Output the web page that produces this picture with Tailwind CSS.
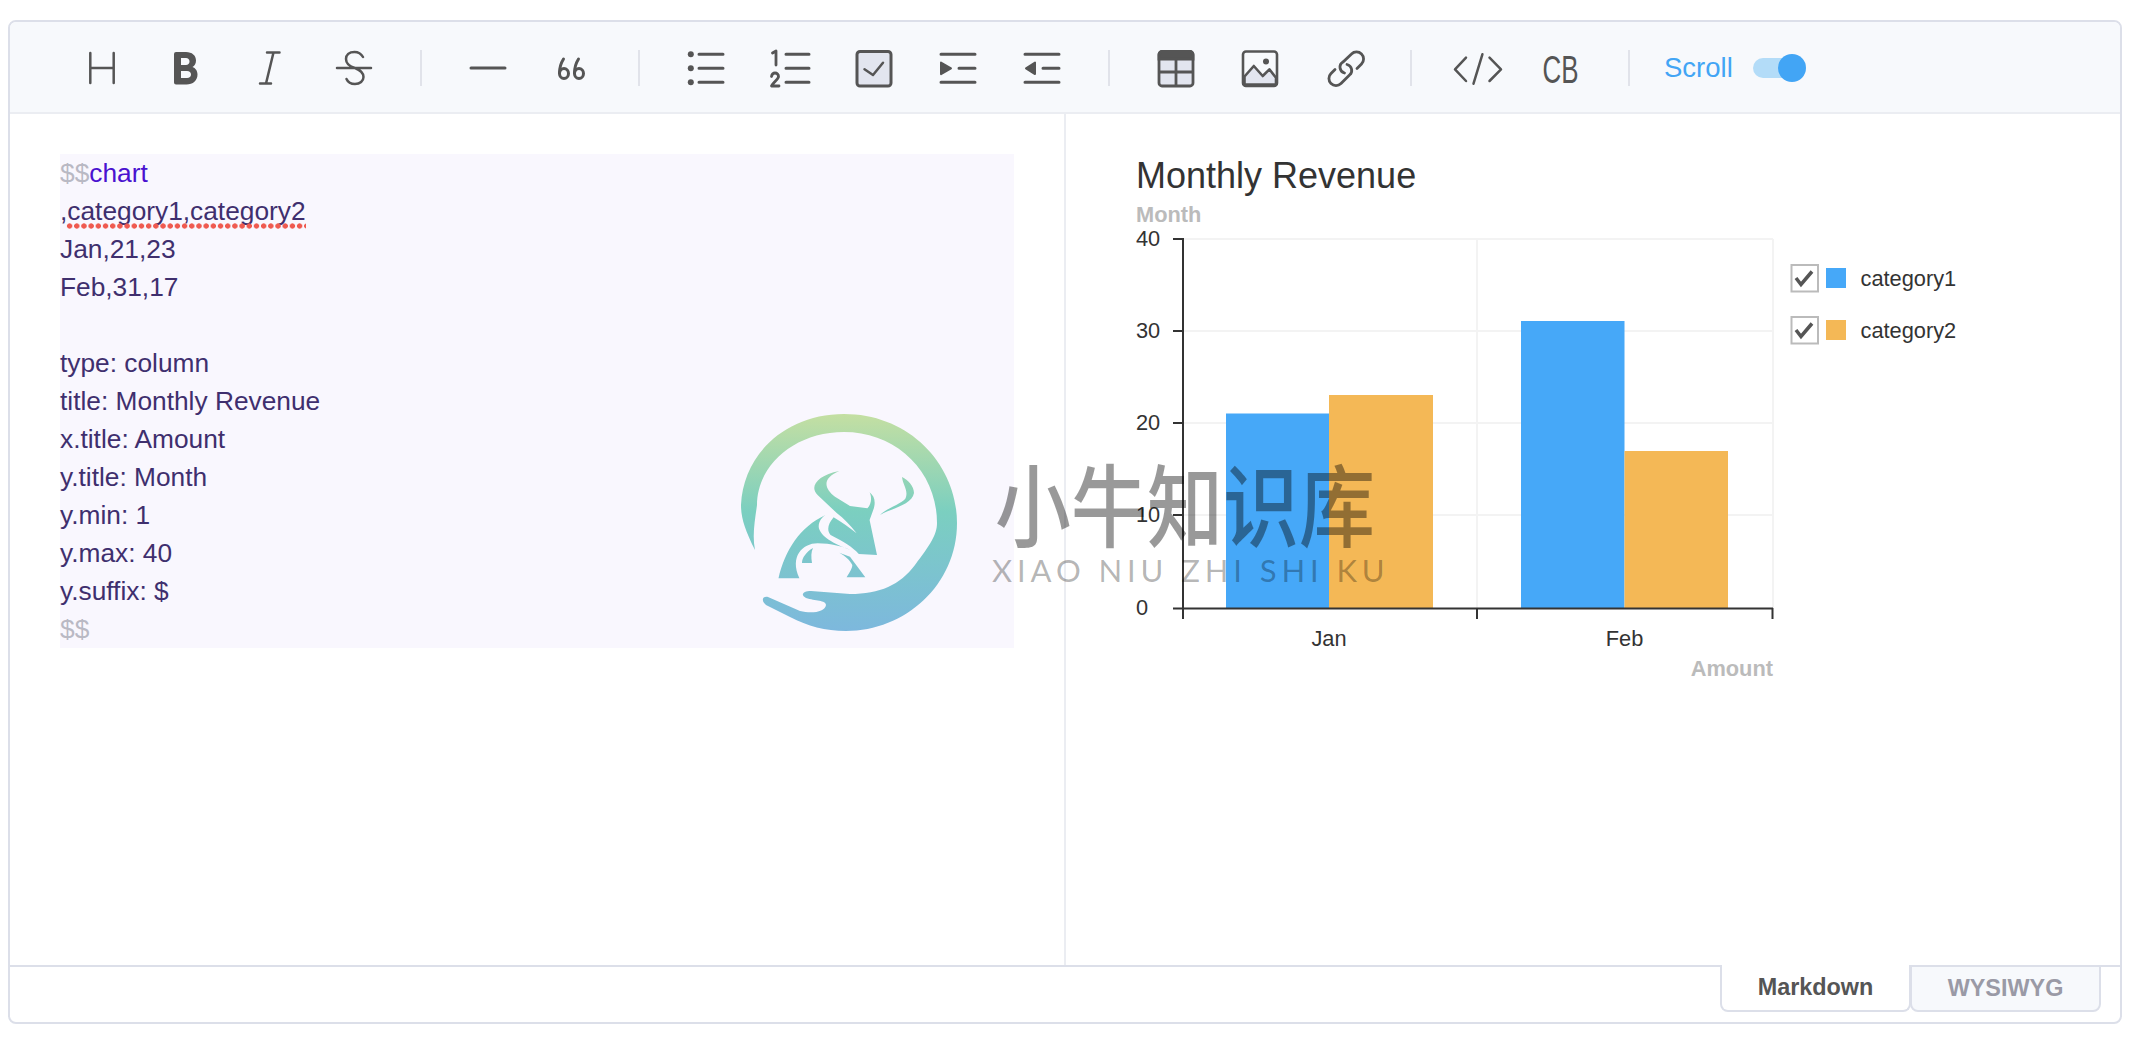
<!DOCTYPE html>
<html>
<head>
  <title>Markdown Editor</title>
  <script src="https://cdn.jsdelivr.net/npm/@tailwindcss/browser@4"></script>
</head>
<body class="bg-white font-['Liberation_Sans',Arial,sans-serif]">

<div class="relative w-[2114px] h-[1004px] ml-2 mt-5 border-2 border-[#dcdfe9] rounded-[8px] flex flex-col overflow-hidden">

  <!-- Toolbar -->
  <div class="h-[92px] shrink-0 bg-[#f7f9fc] border-b-2 border-[#ebedf2] pl-[50px] pt-[1px] flex items-center text-[#555555]">
    <button class="w-[84px] flex justify-center"><svg class="w-10 h-10 overflow-visible" viewBox="0 0 40 40" fill="none" stroke="#555" stroke-width="2.5" stroke-linecap="round"><path d="M8.3 5v30M31.7 5v30M8.3 20h23.4"/></svg></button>
    <button class="w-[84px] flex justify-center"><svg class="w-10 h-10 overflow-visible" viewBox="0 0 40 40" fill="#555" fill-rule="evenodd"><path d="M10 4h10c6 0 10 3.5 10 8.5 0 3-1.5 5.5-3.5 6.5 3 1 5 4 5 7.5 0 6-4.5 10-11 10H10a2 2 0 0 1-2-2V6a2 2 0 0 1 2-2z M15 10v7h5c2 0 3.5-1.5 3.5-3.5S22 10 20 10z M15 23v7h6c2.5 0 4-1.5 4-3.5S23.5 23 21 23z"/></svg></button>
    <button class="w-[84px] flex justify-center"><svg class="w-10 h-10 overflow-visible" viewBox="0 0 40 40" fill="none" stroke="#555" stroke-width="2.5" stroke-linecap="round"><path d="M17 4.5h12.5M10 35.5h11M23.5 4.500L16 35.5"/></svg></button>
    <button class="w-[84px] flex justify-center"><svg class="w-10 h-10 overflow-visible" viewBox="0 0 40 40" fill="none" stroke="#555" stroke-width="2.5" stroke-linecap="round"><path d="M3 20h34M29 9C27 5.5 24 4 20.5 4 15 4 12 7 12 11c0 4.5 4 7.5 9 9 5 2 8.5 4.5 8.5 9 0 4-3.5 7-8.5 7-4 0-7-1.5-8.5-5"/></svg></button>
    <div class="w-[50px] flex justify-center"><div class="w-[2px] h-9 bg-[#e1e3ea]"></div></div>
    <button class="w-[84px] flex justify-center"><svg class="w-10 h-10 overflow-visible" viewBox="0 0 40 40" fill="none" stroke="#555" stroke-width="3" stroke-linecap="round"><path d="M3 20h34"/></svg></button>
    <button class="w-[84px] flex justify-center"><svg class="w-10 h-10 overflow-visible" viewBox="0 0 40 40" fill="none" stroke="#555" stroke-width="3" stroke-linecap="round"><path d="M11.5 11C9 15 7.5 19 7.5 25"/><ellipse cx="12" cy="25.5" rx="4.5" ry="5"/><path d="M26.5 11C24 15 22.5 19 22.5 25"/><ellipse cx="27" cy="25.5" rx="4.5" ry="5"/></svg></button>
    <div class="w-[50px] flex justify-center"><div class="w-[2px] h-9 bg-[#e1e3ea]"></div></div>
    <button class="w-[84px] flex justify-center"><svg class="w-10 h-10 overflow-visible" viewBox="0 0 40 40" fill="#555" stroke="none"><circle cx="4.8" cy="6.3" r="3"/><circle cx="4.8" cy="20.3" r="3"/><circle cx="4.8" cy="34.3" r="3"/><path d="M13 6.3h24M13 20.3h24M13 34.3h24" stroke="#555" stroke-width="3" stroke-linecap="round" fill="none"/></svg></button>
    <button class="w-[84px] flex justify-center"><svg class="w-10 h-10 overflow-visible" viewBox="0 0 40 40" fill="none" stroke="#555" stroke-width="3" stroke-linecap="round" stroke-linejoin="round"><path d="M16 6.3h23M16 20.3h23M16 34.3h23"/><path d="M2.5 5L6 3v14" stroke-width="2.8"/><path d="M1.5 28.5c.5-2.5 2-3.500 3.500-3.500 2 0 3.500 1.500 3.500 3.500 0 3-5 5.500-7 9.500h7.500" stroke-width="2.8"/></svg></button>
    <button class="w-[84px] flex justify-center"><svg class="w-10 h-10 overflow-visible" viewBox="0 0 40 40" fill="none" stroke="#555" stroke-width="3" stroke-linecap="round" stroke-linejoin="round"><rect x="3" y="3.5" width="34" height="34.5" rx="3" fill="#e2e5ef"/><path d="M10.500 21.300L19 27l10-12.300" stroke-width="2.5"/></svg></button>
    <button class="w-[84px] flex justify-center"><svg class="w-10 h-10 overflow-visible" viewBox="0 0 40 40" fill="#555"><path d="M3 6.3h34M3 34.3h34M21 20.3h16" stroke="#555" stroke-width="3" stroke-linecap="round" fill="none"/><path d="M3 14.500l10 5.800-10 5.800z" stroke="#555" stroke-width="2" stroke-linejoin="round"/></svg></button>
    <button class="w-[84px] flex justify-center"><svg class="w-10 h-10 overflow-visible" viewBox="0 0 40 40" fill="#555"><path d="M3 6.3h34M3 34.3h34M21 20.3h16" stroke="#555" stroke-width="3" stroke-linecap="round" fill="none"/><path d="M4 20.300l9-5.800v11.600z" stroke="#555" stroke-width="2" stroke-linejoin="round"/></svg></button>
    <div class="w-[50px] flex justify-center"><div class="w-[2px] h-9 bg-[#e1e3ea]"></div></div>
    <button class="w-[84px] flex justify-center"><svg class="w-10 h-10 overflow-visible" viewBox="0 0 40 40" fill="none" stroke="#555" stroke-width="2.8"><rect x="3" y="3.5" width="34" height="34.5" rx="3" fill="#e2e5ef"/><path d="M3 7a3 3 0 0 1 3-3.500h28a3 3 0 0 1 3 3.500v4H3z" fill="#555"/><path d="M20 11v26M4 24h32"/></svg></button>
    <button class="w-[84px] flex justify-center"><svg class="w-10 h-10 overflow-visible" viewBox="0 0 40 40" fill="none" stroke="#555" stroke-width="2.6" stroke-linejoin="round"><path d="M4.500 28.500l9.300-10.500 8.900 10 6.700-6.700 6.600 8.500V36.500H4.500z" fill="#e2e5ef"/><rect x="3" y="3.5" width="34" height="34.5" rx="3"/><circle cx="26" cy="13.500" r="3" fill="#555" stroke="none"/></svg></button>
    <button class="w-[84px] flex justify-center"><svg class="w-10 h-10 overflow-visible" viewBox="0 0 40 40" fill="none" stroke="#555" stroke-width="2.8" stroke-linecap="round"><path d="M33 20.500l4.500-4.500a7 7 0 0 0-10-10L19 14a6 6 0 0 0 1.500 11"/><path d="M11 21.500l-4 4a7 7 0 0 0 10 10L25.500 27a6 6 0 0 0-2.500-10.500"/></svg></button>
    <div class="w-[50px] flex justify-center"><div class="w-[2px] h-9 bg-[#e1e3ea]"></div></div>
    <button class="w-[84px] flex justify-center"><svg class="w-10 h-10 overflow-visible" viewBox="0 0 40 40" fill="none" stroke="#555" stroke-width="2.5" stroke-linecap="round" stroke-linejoin="round"><path d="M8 9.700L-3 21.300 8 33M31.500 9.700L43 21.300 31.500 33M24.400 6.300L15.500 35.700"/></svg></button>
    <button class="w-[84px] flex justify-center"><svg class="w-10 h-10 overflow-visible" viewBox="0 0 40 40"><text x="0.500" y="34.500" fill="#555" font-family="Liberation Sans, Arial, sans-serif" font-size="38.600" textLength="36" lengthAdjust="spacingAndGlyphs">CB</text></svg></button>
    <div class="w-[50px] flex justify-center"><div class="w-[2px] h-9 bg-[#e1e3ea]"></div></div>
    <span class="ml-[10px] text-[#42a5f5] text-[27.500px] leading-none">Scroll</span>
    <div class="relative ml-5 w-[53px] h-[28px] flex items-center">
      <div class="w-[41px] h-5 rounded-full bg-[#b3dcf8]"></div>
      <div class="absolute right-0 top-0 w-[28px] h-[28px] rounded-full bg-[#42a5f5]"></div>
    </div>
  </div>

  <!-- Editor + preview -->
  <div class="flex-1 flex min-h-0">
    <div class="w-[1056px] shrink-0 border-r-2 border-[#ebedf2] pl-[50px] pt-10">
      <div class="w-[954px] bg-[#f9f7fe] text-[#3f2f6e] text-[26.300px] leading-[38px]">
        <div class="whitespace-pre"><span class="text-[#b9b9c4]">$$</span><span class="text-[#4a12d0]">chart</span></div>
        <div class="relative w-fit">,category1,category2<span class="absolute left-[6px] right-0 bottom-[1px] h-[6px] bg-[radial-gradient(circle,#ef5a50_2.300px,transparent_3px)] bg-[length:7.200px_6px]"></span></div>
        <div>Jan,21,23</div>
        <div>Feb,31,17</div>
        <div class="h-[38px]"></div>
        <div>type: column</div>
        <div>title: Monthly Revenue</div>
        <div>x.title: Amount</div>
        <div>y.title: Month</div>
        <div>y.min: 1</div>
        <div>y.max: 40</div>
        <div>y.suffix: $</div>
        <div class="text-[#b9b9c4]">$$</div>
      </div>
    </div>

    <!-- Preview chart -->
    <div class="flex-1 pl-[70px] pt-[42px]">
      <h1 class="text-[36px] leading-[40px] text-[#333333]">Monthly Revenue</h1>
      <svg class="block mt-[1px] overflow-visible" width="960" height="520" viewBox="1136 197 960 520" font-family="Liberation Sans, Arial, sans-serif" font-size="21.800">
        <text x="1136" y="222" fill="#bbbbbb" font-weight="700">Month</text>
        <g stroke="#f3f3f3" stroke-width="2">
          <path d="M1183 239H1773M1183 331H1773M1183 423H1773M1183 515H1773M1477 239V608M1773 239V608"/>
        </g>
        <rect x="1226" y="413.500" width="103" height="194.500" fill="#46a8f8"/>
        <rect x="1329" y="395" width="104" height="213" fill="#f4b856"/>
        <rect x="1521" y="321" width="103.500" height="287" fill="#46a8f8"/>
        <rect x="1624.500" y="451" width="103.500" height="157" fill="#f4b856"/>
        <g stroke="#333333" stroke-width="2" fill="none">
          <path d="M1183 238V619M1173 239H1183M1173 331H1183M1173 423H1183M1173 515H1183M1173 608.500H1773M1477 608V619M1772.500 608V619"/>
        </g>
        <g fill="#333333">
          <text x="1136" y="246">40</text>
          <text x="1136" y="338">30</text>
          <text x="1136" y="430">20</text>
          <text x="1136" y="522">10</text>
          <text x="1136" y="615">0</text>
          <text x="1329" y="646" text-anchor="middle">Jan</text>
          <text x="1624.500" y="646" text-anchor="middle">Feb</text>
          <text x="1860.500" y="285.500">category1</text>
          <text x="1860.500" y="337.500">category2</text>
        </g>
        <text x="1773" y="676" fill="#bbbbbb" font-weight="700" text-anchor="end">Amount</text>
        <rect x="1791.500" y="265" width="26.500" height="26.500" fill="#fff" stroke="#bbbbbb" stroke-width="2"/>
        <path d="M1796 278l5 6.500 11-13" fill="none" stroke="#555" stroke-width="3.500"/>
        <rect x="1826" y="268" width="20" height="20" fill="#46a8f8"/>
        <rect x="1791.500" y="317" width="26.500" height="26.500" fill="#fff" stroke="#bbbbbb" stroke-width="2"/>
        <path d="M1796 330l5 6.500 11-13" fill="none" stroke="#555" stroke-width="3.500"/>
        <rect x="1826" y="320" width="20" height="20" fill="#f4b856"/>
      </svg>
    </div>
  </div>

  <!-- Mode switch -->
  <div class="relative h-[57px] shrink-0 border-t-2 border-[#dcdfe9]">
    <div class="absolute right-[19px] top-[-2px] flex text-[23.400px] font-bold">
      <div class="w-[191px] h-[47px] bg-white border-2 border-t-0 border-[#dcdfe9] rounded-b-[8px] text-[#555555] flex items-center justify-center">Markdown</div>
      <div class="w-[191px] h-[47px] -ml-[1px] bg-[#f7f9fc] border-2 border-[#dcdfe9] rounded-b-[8px] text-[#9a9aa6] flex items-center justify-center">WYSIWYG</div>
    </div>
  </div>

  <!-- Watermark -->
  <svg class="absolute left-[728px] top-[388px] pointer-events-none" width="224" height="226" viewBox="738 410 224 226">
    <defs>
      <linearGradient id="wm" gradientUnits="userSpaceOnUse" x1="0" y1="414" x2="0" y2="631">
        <stop offset="0" stop-color="#c4dfa2"/>
        <stop offset="0.45" stop-color="#7bcfc0"/>
        <stop offset="1" stop-color="#7db8dd"/>
      </linearGradient>
    </defs>
    <g fill="url(#wm)">
      <path d="M755 550C745 530 741 518 741 505 743 455 785 414 844 414 910 414 957 465 957 523 957 585 905 631 846 631 825 631 808 626 790 617L766 605C761 601 762 596 768 597L800 611C812 614 825 612 826 605 826 600 815 601 806 598 800 595 803 591 811 591L850 594C880 594 900 585 915 565 930 545 937 535 937 523 937 470 895 432 844 432 795 432 757 465 757 505 755 520 752 535 755 550Z"/>
      <path d="M839.300 471C821.900 478.300 824 488.300 835 496.700L850 506 867.400 508.300C871.800 503.300 871.800 496.700 869.600 492.300 875.200 496.700 876.100 503.300 872.600 511.700L869.600 520 877 555 858.800 554C852.300 546.700 843.600 541.700 830.600 535 826.200 530 828.400 523.300 833.600 517.300 841.400 521.700 850.100 528.300 856.600 533.300 850 525 843.600 518.300 837 513.300L817.600 495C808.900 486.700 817.600 475 839.300 471Z"/>
      <path d="M825.400 515C800 527 785 550 778.500 578.300H799.400C789.400 556.700 802.400 543.300 817.600 543.300 830.600 543.300 843.600 546.700 852.300 550.700 837 545 821.900 538.300 818.900 528.300 818 523.300 820.600 518.300 825.400 515Z"/>
      <path d="M839.300 552.700L850 556.700 865.300 577.300H846.600C850 572 852.300 568 852.300 565 850 560 845 556 839.300 552.700Z"/>
      <path d="M813 548C806 552 802 558 802 563H812C811 557 811 552 813 548Z"/>
      <path d="M902 477C908 480 914 486 914 493 912 505 892 508 880 515 888 507 905 503 906 497 908 490 903 485 902 477Z"/>
    </g>
  </svg>
  <div class="absolute left-[985px] top-[431px] pointer-events-none text-black/40 font-['Noto_Sans_CJK_SC',sans-serif] text-[76px] leading-[96px] font-medium whitespace-nowrap scale-y-[1.18]">小牛知识库</div>
  <div class="absolute left-[982px] top-[530px] pointer-events-none text-black/30 font-['Lato',sans-serif] font-normal text-[31px] leading-[36px] tracking-[4.900px] whitespace-nowrap">XIAO NIU ZHI SHI KU</div>
</div>

</body>
</html>
